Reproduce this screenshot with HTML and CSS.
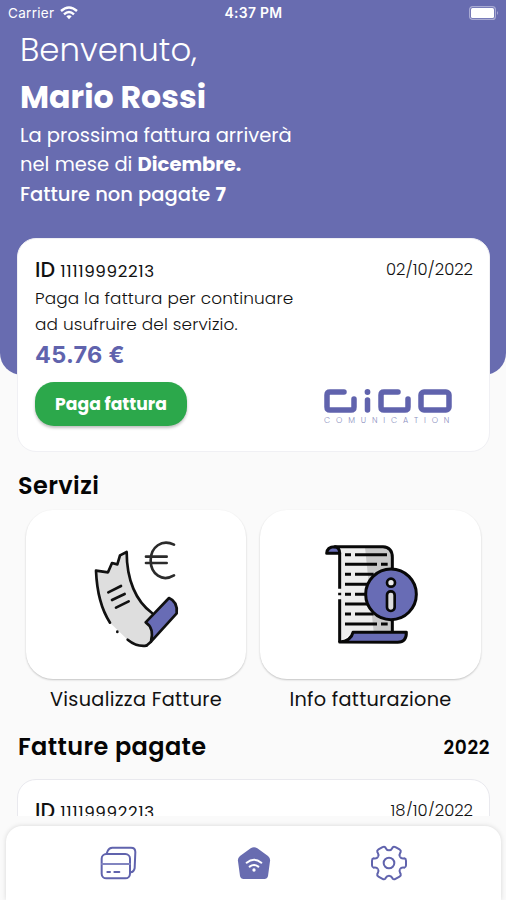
FILE: index.html
```html
<!DOCTYPE html>
<html lang="it">
<head>
<meta charset="utf-8">
<title>Gigo Comunication</title>
<link rel="stylesheet" href="styles.css">
</head>
<body>
<div class="screen">
  <main class="content">
    <header class="hero">
      <div class="status">
        <span class="carrier">Carrier
          <svg class="wifi" viewBox="0 0 18 14"><g fill="none" stroke="#fff" stroke-width="2.4"><path d="M1 5Q9-2 17 5"/><path d="M4 8.3Q9 3.8 14 8.3"/></g><path d="M6.3 10.3Q9 8.3 11.7 10.3L9 13.2z" fill="#fff"/></svg>
        </span>
        <span class="clock">4:37 PM</span>
        <span class="power"><svg class="battery" viewBox="0 0 30 14"><rect x=".6" y=".6" width="25.8" height="12.8" rx="3" fill="none" stroke="#a9abd3" stroke-width="1.2"/><rect x="2" y="2" width="23" height="10" rx="1.5" fill="#fff"/><path d="M28 5q2 2 0 4z" fill="#a9abd3"/></svg></span>
      </div>
      <h1><span class="hello">Benvenuto,</span><span class="name">Mario Rossi</span></h1>
      <p class="intro">La prossima fattura arriverà<br>nel mese di <b>Dicembre.</b><br><span class="unpaid">Fatture non pagate <b>7</b></span></p>
    </header>

    <section class="card">
      <div class="card-top"><span class="id">ID <span class="num">11119992213</span></span><span class="date">02/10/2022</span></div>
      <p class="msg">Paga la fattura per continuare<br>ad usufruire del servizio.</p>
      <div class="price">45.76 €</div>
      <div class="card-bottom">
        <button class="pay">Paga fattura</button>
        <div class="brand">
          <svg class="mark" viewBox="0 0 128 24"><g fill="none" stroke="#6063ad" stroke-width="5.500" stroke-linecap="round" stroke-linejoin="round"><path d="M20 3H6Q3 3 3 6V18Q3 21 6 21H27Q30 21 30 18V10"/><path d="M43.500 11V21"/><path d="M74 3H60Q57 3 57 6V18Q57 21 60 21H81Q84 21 84 18V10"/><rect x="97" y="3" width="28" height="18" rx="3"/></g><circle cx="43.500" cy="3" r="2.900" fill="#6063ad"/></svg>
          <span class="tagline">COMUNICATION</span>
        </div>
      </div>
    </section>

    <h2 class="title">Servizi</h2>
    <section class="services">
      <div class="service">
        <div class="tile">
          <svg class="art" viewBox="-12 0 360 390" fill="none" stroke="#111" stroke-width="8" stroke-linecap="round" stroke-linejoin="round">
            <path fill="#dedede" stroke="none" d="M48 122L84 127L96 99L112 103L120 76L140 66C140 150 168 214 218 250L195 276Q221 301 206 345Q173 357 143 329L90 278Q52 225 48 122z"/>
            <path d="M90 278Q52 220 48 122L84 127L96 99L112 103L120 76L140 66C140 150 168 214 216 249"/>
            <path d="M85 187L123 168M96 210L134 192M108 233L146 214M112 305V306M143 329Q170 351 199 347"/>
            <path fill="#686cb5" d="M197 277L267 204Q294 215 290 250L213 335Q223 294 197 277z"/>
            <path d="M213 335L199 347"/>
            <path stroke="#2b2b2b" d="M282 44C246 26 212 51 212 91C212 133 247 157 282 136M198 80H260M198 99H260"/>
          </svg>
        </div>
        <span class="label">Visualizza Fatture</span>
      </div>
      <div class="service">
        <div class="tile">
          <svg class="art" viewBox="2 -2 360 390" fill="none" stroke="#080808" stroke-width="9" stroke-linejoin="round">
            <path fill="#eee" stroke="none" d="M88 48H222Q246 55 246 78V304H128L90 334z"/>
            <path fill="#c9c9c9" stroke="none" d="M164 50H222Q246 55 246 78V304H190z"/>
            <path fill="#686cb5" d="M49 68Q50 48 74 48Q88 50 88 68z"/>
            <path d="M72 48H218Q246 50 246 80V304M88 66V174M88 186V194M88 206V334"/>
            <path d="M104 72H122M134 72H230M104 101H200M212 101H232M104 131H122M134 131H190M104 161H180M104 191H122M134 191H170M104 220H182M104 250H122M134 250H190M104 280H200M212 280H232"/>
            <path fill="#686cb5" d="M88 334Q122 331 128 305H288Q289 334 262 335z"/>
            <circle cx="242" cy="191" r="76" fill="#686cb5"/>
            <circle cx="242" cy="156" r="12" fill="#eee" stroke-width="8"/>
            <rect x="230" y="182" width="23" height="59" rx="11" fill="#ddd" stroke-width="8"/>
          </svg>
        </div>
        <span class="label">Info fatturazione</span>
      </div>
    </section>

    <div class="paid-head"><h2 class="title">Fatture pagate</h2><span class="year">2022</span></div>
    <section class="card">
      <div class="card-top"><span class="id">ID <span class="num">11119992213</span></span><span class="date">18/10/2022</span></div>
    </section>
  </main>

  <div class="dock">
    <nav class="tabs">
      <svg viewBox="42 26 120 114" fill="none" stroke="#6063ad" stroke-width="6" stroke-linecap="round" stroke-linejoin="round"><rect x="50" y="56" width="85" height="73" rx="14"/><path d="M65 55L68 47Q72 37 82 37H138Q151 37 151 50L149 98Q147 110 136 111"/><path stroke="#8285c0" d="M51 86H134"/><path d="M67 110H75M88 110H103"/></svg>
      <svg viewBox="446 26 120 114"><path d="M496 39Q506 32 516 39L548 62Q556 69 554 78L548 122Q546 131 537 131H475Q466 131 464 122L458 78Q456 69 464 62z" fill="#686cb0"/><g fill="none" stroke="#fff" stroke-width="6" stroke-linecap="round"><path d="M484 82Q506 64 528 82"/><path d="M493 94Q506 84 519 94"/></g><circle cx="506" cy="104" r="5" fill="#fff"/></svg>
      <svg viewBox="-60 -57 120 114" fill="none" stroke="#6063ad" stroke-width="6"><defs><path id="tooth" d="M33-19C37-12 41-14 46-14Q51-13 51-7V7Q51 13 46 14C41 14 37 12 33 19"/></defs><use href="#tooth"/><use href="#tooth" transform="rotate(60)"/><use href="#tooth" transform="rotate(120)"/><use href="#tooth" transform="rotate(180)"/><use href="#tooth" transform="rotate(240)"/><use href="#tooth" transform="rotate(300)"/><circle r="16"/></svg>
    </nav>
  </div>
</div>
</body>
</html>
```
FILE: styles.css
```css
* { box-sizing: border-box; }
body { margin: 0; font-family: Poppins, Inter, sans-serif; color: #111; background: #fafafa; }
h1, h2, p { margin: 0; font-weight: inherit; }
.screen { width: 506px; height: 900px; overflow: hidden; display: flex; flex-direction: column; }
.content { flex: none; height: 816px; overflow: hidden; }
.hero { height: 375px; background: #686cb0; color: #fff; border-radius: 0 0 22px 22px; }
.status { height: 26px; padding: 0 7px 0 8px; display: grid; grid-template-columns: 1fr auto 1fr; align-items: center; font: 13.500px Inter, sans-serif; letter-spacing: .3px; }
.carrier { display: flex; align-items: center; gap: 6px; }
.wifi { width: 18px; height: 14px; }
.clock { font-weight: 600; font-size: 13.900px; }
.power { display: flex; justify-content: flex-end; }
.battery { width: 30px; height: 14px; }
.hello, .name { display: block; padding-left: 20px; }
.hello { font-size: 32.400px; line-height: 47px; font-weight: 300; }
.name { font-size: 31.700px; line-height: 48px; font-weight: 700; }
.intro { padding-left: 20px; font-size: 19.550px; line-height: 29.300px; }
.unpaid { font-weight: 500; }
.card { height: 214px; margin: 0 16px 0 17px; padding: 18px 16px 0 17px; background: #fff; border: 1px solid #e9e9ee; border-radius: 19px; }
.hero + .card { margin-top: -137px; border-color: #f0f0f4; }
.card-top { display: flex; justify-content: space-between; line-height: 26px; margin-bottom: 1px; }
.id { font-size: 20.500px; font-weight: 500; }
.num { font-size: 16.800px; font-weight: 400; letter-spacing: .6px; }
.date { font-size: 16.400px; line-height: 25px; font-weight: 300; }
.msg { font-size: 16.900px; line-height: 26px; font-weight: 300; letter-spacing: .15px; }
.price { font-family: Inter, sans-serif; font-size: 23.500px; line-height: 36px; font-weight: 700; color: #6063ad; letter-spacing: .3px; }
.card-bottom { display: flex; justify-content: space-between; padding: 9px 21px 0 0; }
.pay { width: 152px; height: 44px; padding: 0; border: 0; border-radius: 19px; background: #2ca84b; color: #fff; font: 700 17.200px Poppins, Inter, sans-serif; box-shadow: 0 2px 3px rgba(0,0,0,.25); }
.brand { display: flex; flex-direction: column; width: 128px; padding-top: 7px; }
.mark { width: 128px; height: 24px; }
.tagline { font-size: 8px; line-height: 16px; font-weight: 300; color: #8c8fc0; letter-spacing: 5.850px; white-space: nowrap; }
.title { font-size: 24px; line-height: 36px; font-weight: 600; color: #050505; letter-spacing: .4px; }
.content > .title { margin: 16px 0 6px 18px; }
.services { display: grid; grid-template-columns: 220px 221px; gap: 14px; margin-left: 26px; }
.service { display: flex; flex-direction: column; align-items: center; }
.tile { width: 100%; height: 169px; display: flex; align-items: center; justify-content: center; background: #fff; border-radius: 27px; box-shadow: 0 1px 2px rgba(0,0,0,.22); }
.art { width: 120px; height: 130px; }
.label { font-size: 19.300px; line-height: 28px; margin-top: 7px; letter-spacing: .3px; }
.paid-head { display: flex; justify-content: space-between; align-items: center; margin: 15px 16px 14px 18px; }
.year { font-size: 18.600px; font-weight: 600; color: #050505; letter-spacing: .6px; }
.dock { flex: 1; padding: 10px 5px 0 6px; }
.tabs { height: 74px; padding-top: 18px; display: grid; grid-template-columns: repeat(3, 135px); justify-content: center; justify-items: center; background: #fff; border-radius: 16px 16px 0 0; box-shadow: 0 0 5px rgba(0,0,0,.14); }
.tabs svg { width: 40px; height: 38px; }
```
